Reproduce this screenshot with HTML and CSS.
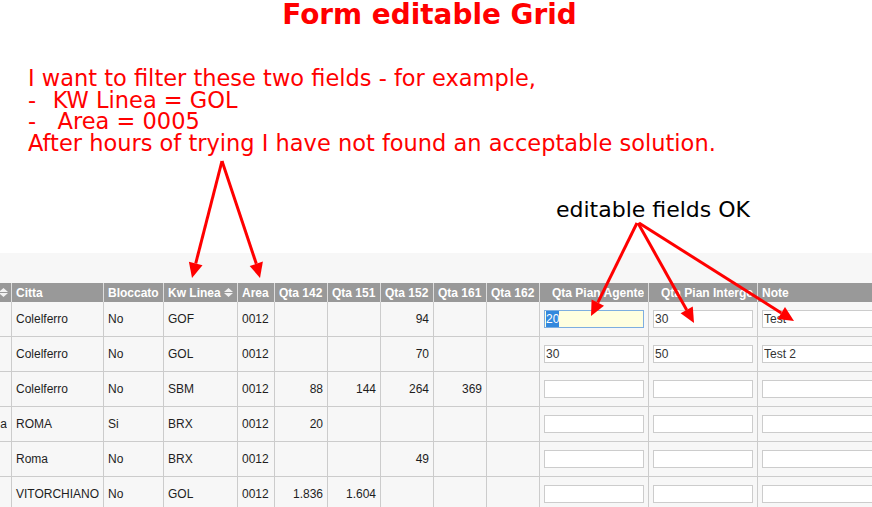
FILE: index.html
```html
<!DOCTYPE html>
<html lang="en">
<head>
<meta charset="utf-8">
<title>Form editable Grid</title>
<link rel="stylesheet" href="styles.css">
</head>
<body>
<div class="page">
  <header class="top">
    <h1 class="title">Form editable Grid</h1>
    <p class="note note-filter">I want to filter these two fields - for example,
-  &#8202;KW Linea = GOL
-   Area = 0005
After hours of trying I have not found an acceptable solution.</p>
    <p class="note note-edit">editable fields OK</p>
  </header>

  <section class="panel">
    <div class="grid">
      <div class="row head">
        <div class="cell c-end"><span class="clip">Provincia</span><svg class="sort" viewBox="0 0 9 9"><path d="M0 4L4.5 0L9 4Z M0 5L4.5 9L9 5Z"/></svg></div>
        <div class="cell">Citta</div>
        <div class="cell">Bloccato</div>
        <div class="cell">Kw Linea<svg class="sort" viewBox="0 0 9 9"><path d="M0 4L4.5 0L9 4Z M0 5L4.5 9L9 5Z"/></svg></div>
        <div class="cell">Area</div>
        <div class="cell">Qta 142</div>
        <div class="cell">Qta 151</div>
        <div class="cell">Qta 152</div>
        <div class="cell">Qta 161</div>
        <div class="cell">Qta 162</div>
        <div class="cell wide"><span class="clip">Qta Pian Agente</span></div>
        <div class="cell wide"><span class="clip">Qta Pian Intergest</span></div>
        <div class="cell">Note</div>
      </div>

      <div class="row">
        <div class="cell c-end"></div>
        <div class="cell">Colelferro</div>
        <div class="cell">No</div>
        <div class="cell">GOF</div>
        <div class="cell">0012</div>
        <div class="cell num"></div>
        <div class="cell num"></div>
        <div class="cell num">94</div>
        <div class="cell num"></div>
        <div class="cell num"></div>
        <div class="cell"><div class="field field-focus" contenteditable="true"><span class="sel">20</span></div></div>
        <div class="cell"><input class="field" value="30"></div>
        <div class="cell"><input class="field" value="Test"></div>
      </div>

      <div class="row">
        <div class="cell c-end"></div>
        <div class="cell">Colelferro</div>
        <div class="cell">No</div>
        <div class="cell">GOL</div>
        <div class="cell">0012</div>
        <div class="cell num"></div>
        <div class="cell num"></div>
        <div class="cell num">70</div>
        <div class="cell num"></div>
        <div class="cell num"></div>
        <div class="cell"><input class="field" value="30"></div>
        <div class="cell"><input class="field" value="50"></div>
        <div class="cell"><input class="field" value="Test 2"></div>
      </div>

      <div class="row">
        <div class="cell c-end"></div>
        <div class="cell">Colelferro</div>
        <div class="cell">No</div>
        <div class="cell">SBM</div>
        <div class="cell">0012</div>
        <div class="cell num">88</div>
        <div class="cell num">144</div>
        <div class="cell num">264</div>
        <div class="cell num">369</div>
        <div class="cell num"></div>
        <div class="cell"><input class="field" value=""></div>
        <div class="cell"><input class="field" value=""></div>
        <div class="cell"><input class="field" value=""></div>
      </div>

      <div class="row">
        <div class="cell c-end"><span class="clip">Roma</span></div>
        <div class="cell">ROMA</div>
        <div class="cell">Si</div>
        <div class="cell">BRX</div>
        <div class="cell">0012</div>
        <div class="cell num">20</div>
        <div class="cell num"></div>
        <div class="cell num"></div>
        <div class="cell num"></div>
        <div class="cell num"></div>
        <div class="cell"><input class="field" value=""></div>
        <div class="cell"><input class="field" value=""></div>
        <div class="cell"><input class="field" value=""></div>
      </div>

      <div class="row">
        <div class="cell c-end"></div>
        <div class="cell">Roma</div>
        <div class="cell">No</div>
        <div class="cell">BRX</div>
        <div class="cell">0012</div>
        <div class="cell num"></div>
        <div class="cell num"></div>
        <div class="cell num">49</div>
        <div class="cell num"></div>
        <div class="cell num"></div>
        <div class="cell"><input class="field" value=""></div>
        <div class="cell"><input class="field" value=""></div>
        <div class="cell"><input class="field" value=""></div>
      </div>

      <div class="row">
        <div class="cell c-end"></div>
        <div class="cell">VITORCHIANO</div>
        <div class="cell">No</div>
        <div class="cell">GOL</div>
        <div class="cell">0012</div>
        <div class="cell num">1.836</div>
        <div class="cell num">1.604</div>
        <div class="cell num"></div>
        <div class="cell num"></div>
        <div class="cell num"></div>
        <div class="cell"><input class="field" value=""></div>
        <div class="cell"><input class="field" value=""></div>
        <div class="cell"><input class="field" value=""></div>
      </div>
    </div>
  </section>

  <svg class="arrows" viewBox="0 0 872 507" aria-hidden="true">
    <g class="shaft">
      <line x1="222" y1="161" x2="195.7" y2="263.5"/>
      <line x1="222" y1="161" x2="256.3" y2="263.8"/>
      <line x1="637" y1="223" x2="597.8" y2="302.6"/>
      <line x1="638" y1="223" x2="686.7" y2="309.9"/>
      <line x1="639" y1="223" x2="781.3" y2="313"/>
    </g>
    <g class="head">
      <polygon points="192,278 202.5,265.2 188.9,261.8"/>
      <polygon points="260,278 262.9,261.6 249.7,266"/>
      <polygon points="591,316 604,305.8 591.6,299.4"/>
      <polygon points="694,323 692.8,306.5 680.6,313.3"/>
      <polygon points="794,321 785,307.1 777.6,318.9"/>
    </g>
  </svg>
</div>
</body>
</html>
```

FILE: styles.css
```css
html, body {
  margin: 0;
  padding: 0;
  overflow: hidden;
  background: #ffffff;
}

.page {
  position: relative;
  width: 872px;
  height: 507px;
  overflow: hidden;
  font-family: "Liberation Sans", Arial, sans-serif;
  font-size: 12px;
  color: #1e1e1e;
}

/* ---------- annotations ---------- */
.top {
  height: 253px;
  box-sizing: border-box;
  display: flex;
  flex-direction: column;
}

.title {
  margin: 0;
  font-family: "DejaVu Sans", Verdana, sans-serif;
  font-weight: bold;
  font-size: 27.9px;
  line-height: 30px;
  height: 28px;
  color: #ff0000;
  text-align: center;
  padding-right: 13px;
}

.note {
  margin: 0;
  font-family: "DejaVu Sans", Verdana, sans-serif;
  white-space: pre;
}

.note-filter {
  margin-top: 40px;
  padding-left: 28px;
  font-size: 22.5px;
  line-height: 21.7px;
  color: #ff0000;
}

.note-edit {
  margin-top: 44.6px;
  padding-left: 556px;
  font-size: 22px;
  line-height: 22px;
  color: #000000;
}

/* ---------- grid panel ---------- */
.panel {
  height: 254px;
  box-sizing: border-box;
  padding-top: 30px;
  background: #f7f7f7;
  overflow: hidden;
}

.grid {
  width: max-content;
}

.row {
  display: grid;
  grid-template-columns: 11px 92px 60px 74px 37px 53px 53px 53px 53px 53px 109px 109px 150px;
  height: 35px;
  box-sizing: border-box;
  border-bottom: 1px solid #cccccc;
}

.cell {
  display: flex;
  align-items: center;
  min-width: 0;
  overflow: hidden;
  white-space: nowrap;
  padding: 0 4px;
  border-left: 1px solid #cccccc;
}

.cell:first-child {
  border-left: none;
}

.c-end {
  justify-content: flex-end;
  padding: 0 4px 0 0;
}

.num {
  justify-content: flex-end;
}

.clip {
  overflow: hidden;
  white-space: nowrap;
  flex: 0 0 auto;
}

.head {
  height: 19px;
  border-bottom: none;
  background: #999999;
  color: #ffffff;
  font-weight: bold;
}

.head .cell {
  border-left-color: #dddddd;
}

.head .c-end {
  padding-right: 3px;
}

.head .c-end .clip {
  display: none;
}

.head .wide {
  padding-left: 12px;
}

.head .wide .clip {
  flex: 1 1 auto;
  min-width: 0;
}

.sort {
  width: 9px;
  height: 9px;
  margin-left: 3px;
  flex: 0 0 auto;
  fill: #f2f2f2;
}

.c-end .sort {
  margin-left: 0;
}

/* ---------- inputs ---------- */
.field {
  box-sizing: border-box;
  width: 100%;
  height: 18px;
  margin: 0;
  padding: 0 1px;
  border: 1px solid #cccccc;
  background: #ffffff;
  font-family: "Liberation Sans", Arial, sans-serif;
  font-size: 12px;
  color: #333333;
  outline: none;
  display: flex;
  align-items: center;
}

.field-focus {
  background: #ffffe0;
  border-color: #7eaee0;
}

.sel {
  background: #3388dd;
  color: #ffffff;
  line-height: 16px;
}

/* ---------- arrows overlay ---------- */
.arrows {
  position: absolute;
  left: 0;
  top: 0;
  width: 872px;
  height: 507px;
  pointer-events: none;
}

.shaft line {
  stroke: #ff0000;
  stroke-width: 3;
}

.head polygon {
  fill: #ff0000;
}
```
